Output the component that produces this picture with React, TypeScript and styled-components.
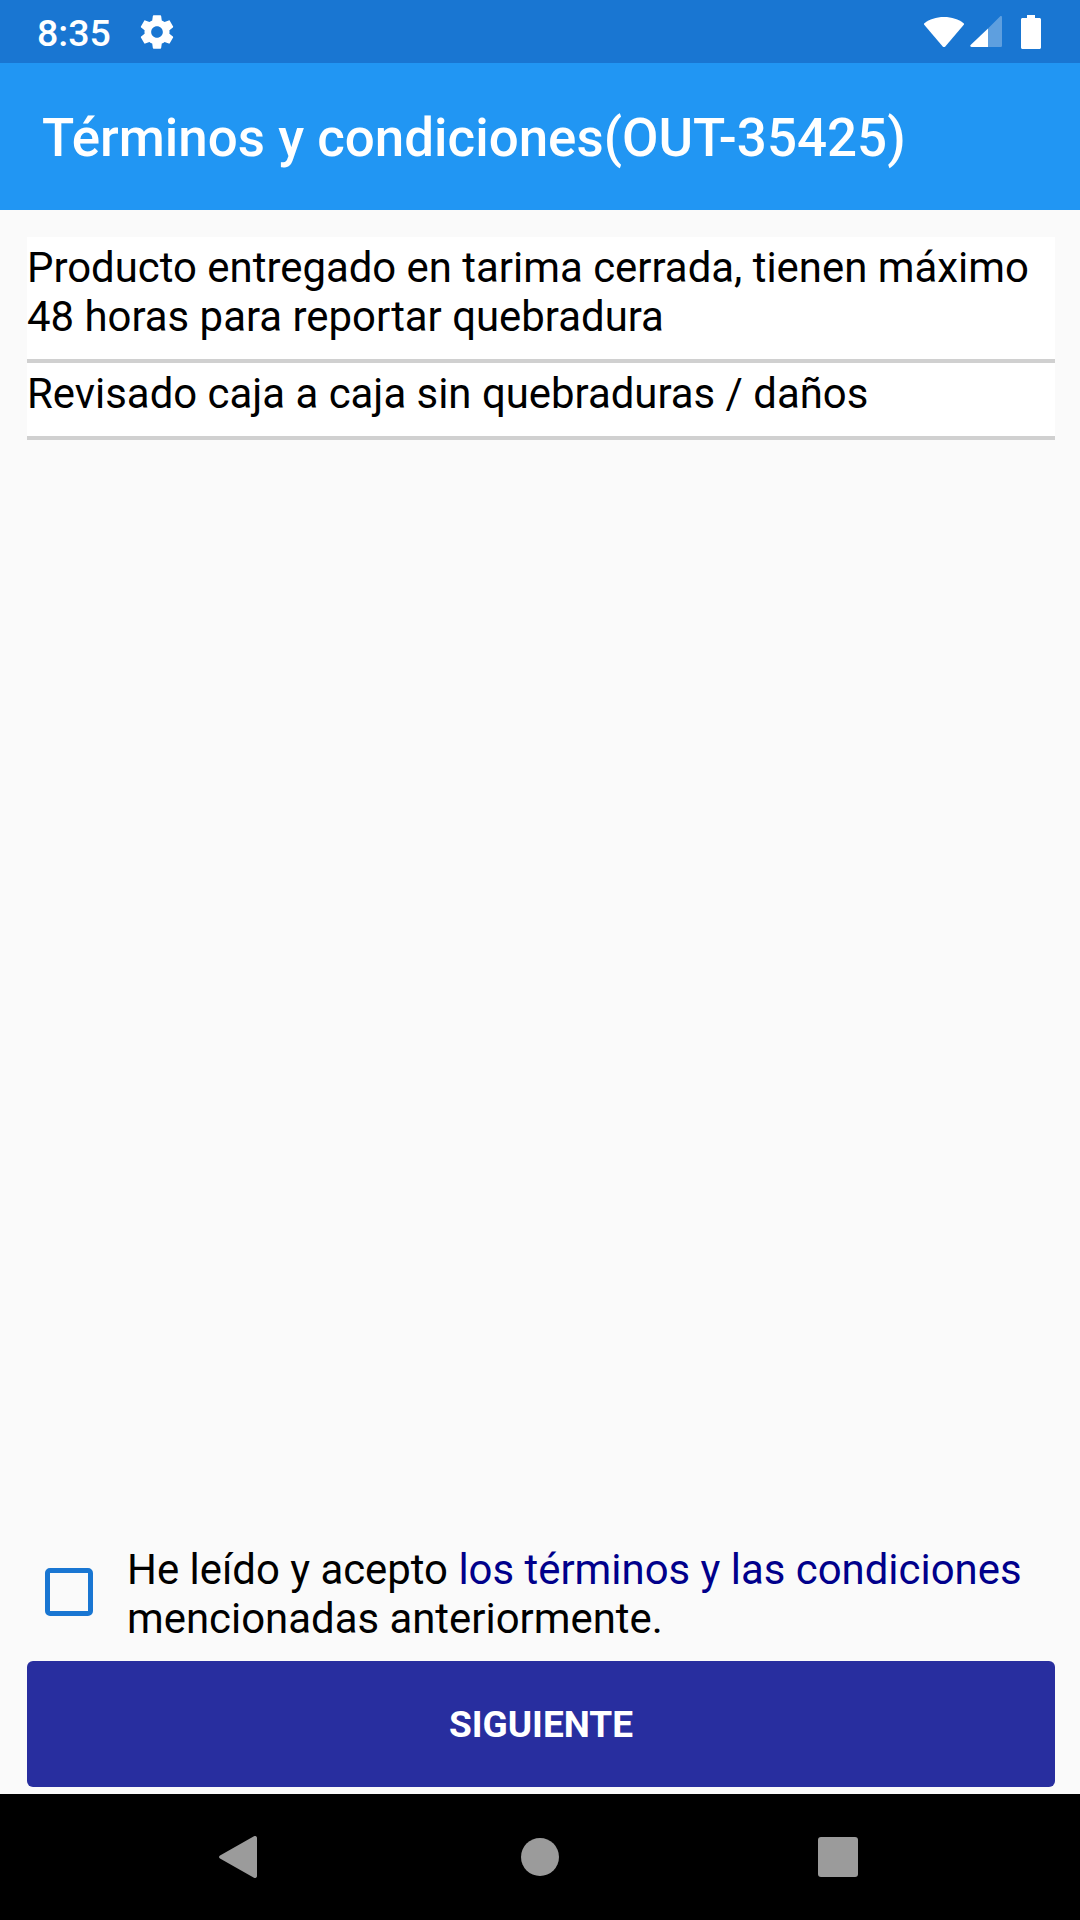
import * as React from 'react'
import styled, { createGlobalStyle } from 'styled-components';

const GlobalStyle = createGlobalStyle`
    html, body {
        margin: 0;
        padding: 0;
        background: #fafafa;
        font-family: Roboto, "Liberation Sans", sans-serif;
    }
`;

const Screen = styled.div`
    display: flex;
    flex-direction: column;
    width: 1080px;
    height: 1920px;
    background: #fafafa;
    overflow: hidden;
`;

const StatusBar = styled.div`
    display: flex;
    align-items: center;
    height: 63px;
    flex-shrink: 0;
    background: #1976d2;
    color: #fff;
    padding: 0 39px 0 37px;
`;

const Clock = styled.span`
    font-size: 37.5px;
    font-weight: 500;
    line-height: 63px;
    width: 100px;
    padding-top: 3px;
`;

const StatusRight = styled.div`
    display: flex;
    align-items: center;
    margin-left: auto;
`;

const AppBar = styled.div`
    display: flex;
    align-items: center;
    height: 147px;
    flex-shrink: 0;
    background: #2196f3;
    color: #fff;
    padding-left: 42px;
    padding-top: 3px;
    box-sizing: border-box;
    font-size: 52.9px;
    font-weight: 500;
`;

const Terms = styled.div`
    display: flex;
    flex-direction: column;
    margin: 27px 25px 0 27px;
`;

const TermRow = styled.div`
    background: #fff;
    border-bottom: 4px solid #d0d0d0;
    color: #000;
    font-size: 41.9px;
    line-height: 49px;
    padding: 6px 0 18px;
`;

const Spacer = styled.div`
    flex: 1;
`;

const AcceptRow = styled.div`
    display: flex;
    align-items: center;
    margin: 0 25px 0 45px;
`;

const Box = styled.div`
    box-sizing: border-box;
    width: 48px;
    height: 48px;
    flex-shrink: 0;
    border: 5px solid #1976d2;
    border-radius: 5px;
    margin: 0 34px 4px 0;
`;

const AcceptText = styled.div`
    color: #000;
    font-size: 41.9px;
    line-height: 49px;
    white-space: nowrap;
`;

const TermsLink = styled.span`
    color: #00008b;
`;

const NextButton = styled.button`
    display: block;
    width: 1028px;
    height: 126px;
    margin: 18px 25px 7px 27px;
    padding: 0;
    border: none;
    border-radius: 6px;
    background: #282e9f;
    color: #fff;
    font-family: Roboto, "Liberation Sans", sans-serif;
    font-size: 37px;
    font-weight: 700;
`;

const NavBar = styled.div`
    display: flex;
    align-items: center;
    height: 126px;
    flex-shrink: 0;
    background: #000;
    padding-left: 219px;
    padding-bottom: 1px;
    box-sizing: border-box;
`;

const NavIcon = styled.svg`
    display: block;
    fill: #9b9b9b;
    margin-right: ${props => props.$gap}px;
`;

const Gear = () => (
    <svg width="40" height="40" viewBox="0 0 24 24" fill="#fff">
        <path d="M19.43 12.98c.04-.32.07-.64.07-.98s-.03-.66-.07-.98l2.11-1.65c.19-.15.24-.42.12-.64l-2-3.46c-.12-.22-.39-.3-.61-.22l-2.49 1c-.52-.4-1.08-.73-1.69-.98l-.38-2.65C14.46 2.18 14.25 2 14 2h-4c-.25 0-.46.18-.49.42l-.38 2.65c-.61.25-1.17.59-1.69.98l-2.49-1c-.23-.09-.49 0-.61.22l-2 3.46c-.13.22-.07.49.12.64l2.11 1.65c-.04.32-.07.65-.07.98s.03.66.07.98l-2.11 1.65c-.19.15-.24.42-.12.64l2 3.46c.12.22.39.3.61.22l2.49-1c.52.4 1.08.73 1.69.98l.38 2.65c.03.24.24.42.49.42h4c.25 0 .46-.18.49-.42l.38-2.65c.61-.25 1.17-.59 1.69-.98l2.49 1c.23.09.49 0 .61-.22l2-3.46c.12-.22.07-.49-.12-.64l-2.11-1.65zM12 15.5c-1.93 0-3.5-1.57-3.5-3.5s1.57-3.5 3.5-3.5 3.5 1.57 3.5 3.5-1.57 3.5-3.5 3.5z" />
    </svg>
);

const Wifi = () => (
    <svg width="42" height="32" viewBox="0 0 42 32" style={{ marginRight: 5 }}>
        <path fill="#fff" d="M21 1c8 0 14.500 2.300 19.600 6.200.5.4.6 1 .2 1.500L22.300 30.500c-.7.800-1.900.800-2.600 0L1.200 8.700c-.4-.5-.3-1.100.2-1.500C6.500 3.300 13 1 21 1z" />
    </svg>
);

const Signal = () => (
    <svg width="32" height="32" viewBox="0 0 32 32" style={{ marginRight: 19 }}>
        <path fill="#fff" fillOpacity="0.3" d="M30 0.500c.9-.8 2-.3 2 .8V29.500c0 1-.7 1.500-1.500 1.500H18V12.500z" />
        <path fill="#fff" d="M18 12.500V31H1.500C.4 31-.2 29.800.6 29z" />
    </svg>
);

const Battery = () => (
    <svg width="20" height="34" viewBox="0 0 20 34">
        <path fill="#fff" d="M6 0h8v3h4.500c.8 0 1.500.7 1.500 1.500V32.500c0 .8-.7 1.500-1.500 1.500H1.500C.7 34 0 33.300 0 32.500V4.500C0 3.700.7 3 1.500 3H6z" />
    </svg>
);

const App = () => (
    <Screen>
        <GlobalStyle />
        <StatusBar>
            <Clock>8:35</Clock>
            <Gear />
            <StatusRight>
                <Wifi />
                <Signal />
                <Battery />
            </StatusRight>
        </StatusBar>
        <AppBar>Términos y condiciones(OUT-35425)</AppBar>
        <Terms>
            <TermRow>Producto entregado en tarima cerrada, tienen máximo<br />48 horas para reportar quebradura</TermRow>
            <TermRow>Revisado caja a caja sin quebraduras / daños</TermRow>
        </Terms>
        <Spacer />
        <AcceptRow>
            <Box />
            <AcceptText>
                He leído y acepto <TermsLink>los términos y las condiciones</TermsLink><br />
                mencionadas anteriormente.
            </AcceptText>
        </AcceptRow>
        <NextButton>SIGUIENTE</NextButton>
        <NavBar>
            <NavIcon $gap={264} width="38" height="42" viewBox="0 0 38 42">
                <path d="M34.500.5c1.500-1.200 3.500-.3 3.500 1.500v38c0 1.800-2 2.700-3.500 1.500L1 22.500c-1.300-.8-1.300-2.200 0-3z" />
            </NavIcon>
            <NavIcon $gap={259} width="38" height="38" viewBox="0 0 38 38">
                <circle cx="19" cy="19" r="19" />
            </NavIcon>
            <NavIcon $gap={0} width="40" height="40" viewBox="0 0 40 40">
                <rect width="40" height="40" rx="3" />
            </NavIcon>
        </NavBar>
    </Screen>
);

export default App;
